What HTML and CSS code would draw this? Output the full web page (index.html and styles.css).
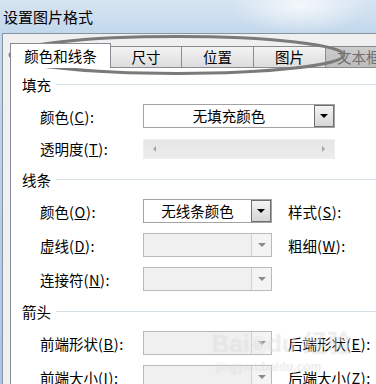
FILE: index.html
```html
<!DOCTYPE html>
<html lang="zh-CN">
<head>
    <meta charset="UTF-8">
    <title>设置图片格式</title>
    <link rel="stylesheet" href="styles.css">
</head>
<body>
    <div class="window">
        <div class="titlebar">设置图片格式</div>
        <div class="frame">
            <div class="client">
                <div class="tabs">
                    <div class="tab active">颜色和线条</div>
                    <div class="tab w71">尺寸</div>
                    <div class="tab w72">位置</div>
                    <div class="tab w72">图片</div>
                    <div class="tab disabled">文本框</div>
                </div>
                <div class="panel">
                    <div class="section">
                        <div class="group-title"><span>填充</span><i class="rule"></i></div>
                        <div class="row">
                            <span class="label">颜色<span class="key">(<u>C</u>):</span></span>
                            <div class="combo wide">
                                <span class="value">无填充颜色</span>
                                <span class="drop"><i class="tri"></i></span>
                            </div>
                        </div>
                        <div class="row slim">
                            <span class="label">透明度<span class="key">(<u>T</u>):</span></span>
                            <div class="slider">
                                <i class="arr left"></i>
                                <i class="arr right"></i>
                            </div>
                        </div>
                    </div>

                    <div class="section">
                        <div class="group-title"><span>线条</span><i class="rule"></i></div>
                        <div class="row">
                            <span class="label">颜色<span class="key">(<u>O</u>):</span></span>
                            <div class="combo">
                                <span class="value">无线条颜色</span>
                                <span class="drop"><i class="tri"></i></span>
                            </div>
                            <span class="label2">样式<span class="key">(<u>S</u>):</span></span>
                        </div>
                        <div class="row">
                            <span class="label">虚线<span class="key">(<u>D</u>):</span></span>
                            <div class="combo off">
                                <span class="value"></span>
                                <span class="drop"><i class="tri"></i></span>
                            </div>
                            <span class="label2">粗细<span class="key">(<u>W</u>):</span></span>
                        </div>
                        <div class="row">
                            <span class="label">连接符<span class="key">(<u>N</u>):</span></span>
                            <div class="combo off">
                                <span class="value"></span>
                                <span class="drop"><i class="tri"></i></span>
                            </div>
                        </div>
                    </div>

                    <div class="section">
                        <div class="group-title"><span>箭头</span><i class="rule"></i></div>
                        <div class="row">
                            <span class="label">前端形状<span class="key">(<u>B</u>):</span></span>
                            <div class="combo off">
                                <span class="value"></span>
                                <span class="drop"><i class="tri"></i></span>
                            </div>
                            <span class="label2">后端形状<span class="key">(<u>E</u>):</span></span>
                        </div>
                        <div class="row">
                            <span class="label">前端大小<span class="key">(<u>I</u>):</span></span>
                            <div class="combo off">
                                <span class="value"></span>
                                <span class="drop"><i class="tri"></i></span>
                            </div>
                            <span class="label2">后端大小<span class="key">(<u>Z</u>):</span></span>
                        </div>
                    </div>
                </div>
            </div>
        </div>
    </div>

    <svg class="ring" width="376" height="90" viewBox="0 0 376 90">
        <ellipse cx="177" cy="55" rx="167" ry="18.5" fill="none" stroke="#7a7a7a" stroke-width="3"/>
    </svg>

    <div class="watermark">
        <div class="wm-big">Bai<span class="paw">&#9673;</span>du 经验</div>
        <div class="wm-small">jingyan.baidu.com</div>
    </div>
</body>
</html>
```

FILE: styles.css
```css
* {
    margin: 0;
    padding: 0;
    box-sizing: border-box;
}
body {
    width: 376px;
    height: 384px;
    overflow: hidden;
    position: relative;
    background: #fff;
    font-family: "Noto Sans CJK SC", "Noto Sans", sans-serif;
    font-size: 14.5px;
    color: #000;
}
.window {
    height: 384px;
    display: flex;
    flex-direction: column;
}
.titlebar {
    height: 33px;
    line-height: 33px;
    padding-left: 3px;
    font-size: 15px;
    background:
        radial-gradient(ellipse 70px 28px at 300px 6px, rgba(255,255,255,0.75), rgba(255,255,255,0)),
        linear-gradient(to bottom, #d6e4f1, #c3d8ec);
}
.frame {
    flex: 1;
    display: flex;
    padding-left: 2px;
    background: linear-gradient(to bottom, #c3d8ec, #a9c6e4);
}
.client {
    flex: 1;
    display: flex;
    flex-direction: column;
    background: #f0f0f0;
    border-left: 1px solid #8794a3;
    border-top: 1px solid #8794a3;
    padding: 9px 0 0 7px;
}

/* tabs */
.tabs {
    display: flex;
    align-items: flex-end;
    height: 24px;
}
.tab {
    height: 21px;
    line-height: 20px;
    text-align: center;
    border: 1px solid #898c95;
    border-left: none;
    border-bottom: none;
    background: linear-gradient(to bottom, #f3f3f3, #dddddd);
}
.tab.active {
    width: 101px;
    height: 25px;
    line-height: 24px;
    margin-bottom: -1px;
    border-left: 1px solid #898c95;
    background: #fff;
    position: relative;
    z-index: 1;
}
.w71 { width: 71px; }
.w72 { width: 72px; }
.tab.disabled {
    width: 80px;
    text-align: left;
    padding-left: 11px;
    color: #6f6f6f;
    background: linear-gradient(to bottom, #cdcdcd, #bdbdbd);
}

/* panel */
.panel {
    flex: 1;
    background: #fff;
    border-left: 1px solid #898c95;
    border-top: 1px solid #898c95;
    padding-top: 6px;
    display: flex;
    flex-direction: column;
    gap: 10px;
}
.section {
    display: flex;
    flex-direction: column;
    gap: 10px;
}
.group-title {
    height: 20px;
    display: flex;
    align-items: center;
    padding-left: 11px;
}
.rule {
    flex: 1;
    height: 1px;
    margin-left: 5px;
    background: #d5dfe6;
}
.row {
    height: 24px;
    display: flex;
    align-items: center;
    padding-left: 29px;
}
.row.slim {
    height: 21px;
}
.label {
    width: 103px;
    white-space: nowrap;
}
.label2 {
    margin-left: 16px;
    white-space: nowrap;
}
.key {
    letter-spacing: 0.6px;
}

/* combo boxes */
.combo {
    width: 129px;
    height: 24px;
    display: flex;
    border: 1px solid #a3a3a3;
    background: #fff;
}
.combo.wide {
    width: 192px;
}
.value {
    flex: 1;
    text-align: center;
    line-height: 22px;
}
.drop {
    width: 20px;
    display: flex;
    align-items: center;
    justify-content: center;
    border: 1px solid #6f6f6f;
    background: linear-gradient(to bottom, #f4f4f4, #d6d6d6);
}
.tri {
    width: 0;
    height: 0;
    border-left: 4px solid transparent;
    border-right: 4px solid transparent;
    border-top: 4px solid #000;
}
.combo.off {
    border-color: #b9b9b9;
    background: #f0f0f0;
}
.combo.off .drop {
    border: none;
    border-left: 1px solid #d2d2d2;
    background: #f4f4f4;
}
.combo.off .tri {
    border-top-color: #8a8a8a;
}

/* slider */
.slider {
    width: 192px;
    height: 20px;
    display: flex;
    align-items: center;
    justify-content: space-between;
    padding: 0 9px;
    background: linear-gradient(to bottom, #e6e6e6, #ececec);
    border: 1px solid #efefef;
}
.arr {
    width: 0;
    height: 0;
    border-top: 3px solid transparent;
    border-bottom: 3px solid transparent;
}
.arr.left {
    border-right: 3px solid #a5a5a5;
}
.arr.right {
    border-left: 3px solid #a5a5a5;
}

/* overlays */
.ring {
    position: absolute;
    left: 0;
    top: 0;
}
.watermark {
    position: absolute;
    left: 212px;
    top: 330px;
    color: rgba(255, 255, 255, 0.35);
    text-shadow: 0 0 1px rgba(150, 150, 150, 0.25);
    pointer-events: none;
}
.wm-big {
    font-family: "Liberation Sans", "Noto Sans CJK SC", sans-serif;
    font-size: 24px;
    font-weight: bold;
    line-height: 28px;
}
.paw {
    font-size: 18px;
}
.wm-small {
    font-family: "Liberation Sans", sans-serif;
    font-size: 12px;
    font-weight: bold;
    padding-left: 4px;
}
```
